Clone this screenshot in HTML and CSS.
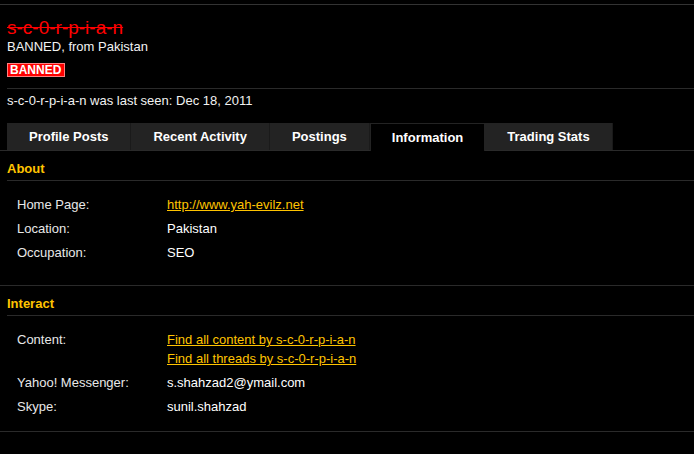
FILE: index.html
```html
<!DOCTYPE html>
<html>
<head>
<meta charset="utf-8">
<link rel="stylesheet" href="styles.css">
</head>
<body>
<div class="page">
  <div class="profile-head">
    <h1 class="username">s-c-0-r-p-i-a-n</h1>
    <div class="user-blurb">BANNED, from Pakistan</div>
    <div class="badges"><span class="badge">BANNED</span></div>
    <div class="last-seen">s-c-0-r-p-i-a-n was last seen: Dec 18, 2011</div>
  </div>
  <ul class="tabs">
    <li class="tab">Profile Posts</li>
    <li class="tab">Recent Activity</li>
    <li class="tab">Postings</li>
    <li class="tab active">Information</li>
    <li class="tab">Trading Stats</li>
  </ul>
  <div class="section section-about">
    <h3 class="section-title">About</h3>
    <dl class="pairs">
      <dt>Home Page:</dt>
      <dd><a href="#">http://www.yah-evilz.net</a></dd>
      <dt>Location:</dt>
      <dd>Pakistan</dd>
      <dt>Occupation:</dt>
      <dd>SEO</dd>
    </dl>
  </div>
  <div class="section section-interact">
    <h3 class="section-title">Interact</h3>
    <dl class="pairs">
      <dt>Content:</dt>
      <dd class="links"><a href="#">Find all content by s-c-0-r-p-i-a-n</a><a href="#">Find all threads by s-c-0-r-p-i-a-n</a></dd>
      <dt>Yahoo! Messenger:</dt>
      <dd>s.shahzad2@ymail.com</dd>
      <dt>Skype:</dt>
      <dd>sunil.shahzad</dd>
    </dl>
  </div>
</div>
</body>
</html>
```

FILE: styles.css
```css
html, body {
  margin: 0;
  padding: 0;
  background: #000;
}
body {
  font-family: "Liberation Sans", Arial, sans-serif;
  font-size: 13px;
  line-height: 16px;
  color: #f2f2f2;
}
.page {
  margin-top: 4px;
  border-top: 1px solid #333;
}
.profile-head {
  padding: 12px 0 0 7px;
}
.username {
  margin: 0;
  font-size: 19px;
  line-height: 22px;
  font-weight: normal;
  color: #ff0000;
  text-decoration: line-through;
}
.user-blurb {
  color: #f2f2f2;
}
.badges {
  margin-top: 8px;
  display: flex;
}
.badge {
  display: block;
  background: #ff0000;
  border: 1px solid #ff8080;
  color: #fff;
  font-size: 12px;
  font-weight: bold;
  line-height: 12px;
  padding: 0 3px 0 2px;
}
.last-seen {
  margin-top: 11px;
  border-top: 1px solid #2a2a2a;
  padding-top: 4px;
  color: #f2f2f2;
}
.tabs {
  list-style: none;
  margin: 14px 0 0 0;
  padding: 0 0 0 7px;
  display: flex;
  border-bottom: 1px solid #2a2a2a;
}
.tab {
  height: 27px;
  line-height: 27px;
  padding: 0 22px;
  background: #232323;
  border-right: 1px solid #1a1a1a;
  color: #fff;
  font-weight: bold;
}
.tab.active {
  background: #000;
  border: 1px solid #232323;
  border-bottom: none;
  height: 27px;
  line-height: 27px;
  margin-bottom: -1px;
  padding: 0 21px;
}
.section {
  padding: 10px 0 0 7px;
  border-bottom: 1px solid #2a2a2a;
}
.section-about {
  padding-bottom: 24px;
}
.section-interact {
  padding-top: 10px;
  padding-bottom: 16px;
}
.section-title {
  margin: 0;
  font-size: 13px;
  line-height: 16px;
  font-weight: bold;
  color: #ffc400;
  padding-bottom: 3px;
  border-bottom: 1px solid #2a2a2a;
}
.pairs {
  margin: 16px 0 0 0;
  padding-left: 10px;
  display: grid;
  grid-template-columns: 150px 1fr;
  row-gap: 8px;
}
.pairs dt {
  color: #e8e8e8;
}
.pairs dd {
  margin: 0;
  color: #fff;
}
.pairs a {
  color: #ffc400;
  text-decoration: underline;
}
.links {
  display: flex;
  flex-direction: column;
  align-items: flex-start;
  row-gap: 3px;
}
```
